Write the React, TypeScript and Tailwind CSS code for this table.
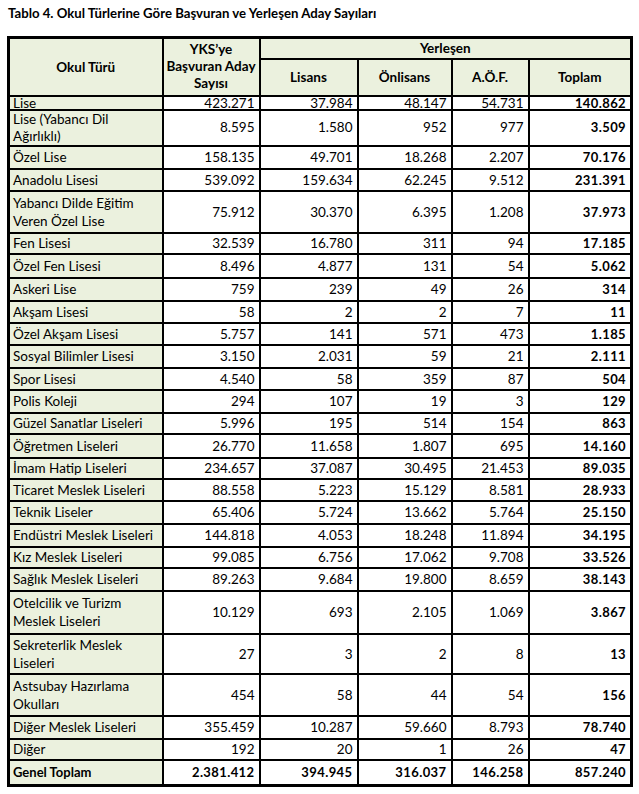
import React from "react";

type Row = {
  label: string[];
  yks: string;
  lisans: string;
  onlisans: string;
  aof: string;
  toplam: string;
  h: string;
};

const rows: Row[] = [
  { label: ["Lise"], yks: "423.271", lisans: "37.984", onlisans: "48.147", aof: "54.731", toplam: "140.862", h: "h-[14px] leading-[12px]" },
  { label: ["Lise (Yabancı Dil", "Ağırlıklı)"], yks: "8.595", lisans: "1.580", onlisans: "952", aof: "977", toplam: "3.509", h: "h-[36px] leading-[17px]" },
  { label: ["Özel Lise"], yks: "158.135", lisans: "49.701", onlisans: "18.268", aof: "2.207", toplam: "70.176", h: "h-[23px]" },
  { label: ["Anadolu Lisesi"], yks: "539.092", lisans: "159.634", onlisans: "62.245", aof: "9.512", toplam: "231.391", h: "h-[22px]" },
  { label: ["Yabancı Dilde Eğitim", "Veren Özel Lise"], yks: "75.912", lisans: "30.370", onlisans: "6.395", aof: "1.208", toplam: "37.973", h: "h-[42px]" },
  { label: ["Fen Lisesi"], yks: "32.539", lisans: "16.780", onlisans: "311", aof: "94", toplam: "17.185", h: "h-[21px]" },
  { label: ["Özel Fen Lisesi"], yks: "8.496", lisans: "4.877", onlisans: "131", aof: "54", toplam: "5.062", h: "h-[24px]" },
  { label: ["Askeri Lise"], yks: "759", lisans: "239", onlisans: "49", aof: "26", toplam: "314", h: "h-[23px]" },
  { label: ["Akşam Lisesi"], yks: "58", lisans: "2", onlisans: "2", aof: "7", toplam: "11", h: "h-[22px]" },
  { label: ["Özel Akşam Lisesi"], yks: "5.757", lisans: "141", onlisans: "571", aof: "473", toplam: "1.185", h: "h-[22px]" },
  { label: ["Sosyal Bilimler Lisesi"], yks: "3.150", lisans: "2.031", onlisans: "59", aof: "21", toplam: "2.111", h: "h-[23px]" },
  { label: ["Spor Lisesi"], yks: "4.540", lisans: "58", onlisans: "359", aof: "87", toplam: "504", h: "h-[22px]" },
  { label: ["Polis Koleji"], yks: "294", lisans: "107", onlisans: "19", aof: "3", toplam: "129", h: "h-[23px]" },
  { label: ["Güzel Sanatlar Liseleri"], yks: "5.996", lisans: "195", onlisans: "514", aof: "154", toplam: "863", h: "h-[21px]" },
  { label: ["Öğretmen Liseleri"], yks: "26.770", lisans: "11.658", onlisans: "1.807", aof: "695", toplam: "14.160", h: "h-[24px]" },
  { label: ["İmam Hatip Liseleri"], yks: "234.657", lisans: "37.087", onlisans: "30.495", aof: "21.453", toplam: "89.035", h: "h-[21px]" },
  { label: ["Ticaret Meslek Liseleri"], yks: "88.558", lisans: "5.223", onlisans: "15.129", aof: "8.581", toplam: "28.933", h: "h-[22px]" },
  { label: ["Teknik Liseler"], yks: "65.406", lisans: "5.724", onlisans: "13.662", aof: "5.764", toplam: "25.150", h: "h-[23px]" },
  { label: ["Endüstri Meslek Liseleri"], yks: "144.818", lisans: "4.053", onlisans: "18.248", aof: "11.894", toplam: "34.195", h: "h-[23px]" },
  { label: ["Kız Meslek Liseleri"], yks: "99.085", lisans: "6.756", onlisans: "17.062", aof: "9.708", toplam: "33.526", h: "h-[21px]" },
  { label: ["Sağlık Meslek Liseleri"], yks: "89.263", lisans: "9.684", onlisans: "19.800", aof: "8.659", toplam: "38.143", h: "h-[23px]" },
  { label: ["Otelcilik ve Turizm", "Meslek Liseleri"], yks: "10.129", lisans: "693", onlisans: "2.105", aof: "1.069", toplam: "3.867", h: "h-[43px]" },
  { label: ["Sekreterlik Meslek", "Liseleri"], yks: "27", lisans: "3", onlisans: "2", aof: "8", toplam: "13", h: "h-[40px]" },
  { label: ["Astsubay Hazırlama", "Okulları"], yks: "454", lisans: "58", onlisans: "44", aof: "54", toplam: "156", h: "h-[42px]" },
  { label: ["Diğer Meslek Liseleri"], yks: "355.459", lisans: "10.287", onlisans: "59.660", aof: "8.793", toplam: "78.740", h: "h-[23px]" },
  { label: ["Diğer"], yks: "192", lisans: "20", onlisans: "1", aof: "26", toplam: "47", h: "h-[21px]" },
];

const total = { yks: "2.381.412", lisans: "394.945", onlisans: "316.037", aof: "146.258", toplam: "857.240" };

const td = "border-2 border-black px-0 py-0 align-middle";
const num = `${td} text-right pr-[4px] whitespace-nowrap`;
const bold = `${td} text-right pr-[4px] whitespace-nowrap font-bold text-[13px] tracking-[0.4px]`;
const head = "border-2 border-black bg-[#ebf1de] font-bold text-center align-middle p-0";

export default function App() {
  return (
    <div className="w-[639px] h-[794px] bg-white text-black text-[13.5px] leading-[18px]" style={{ fontFamily: "Lato, 'Open Sans', sans-serif" }}>
      <div className="h-[36px] pl-[8px] pt-[4px] text-[13.2px] font-bold leading-[18px]">
        Tablo 4. Okul Türlerine Göre Başvuran ve Yerleşen Aday Sayıları
      </div>
      <table className="ml-[7px] border-collapse border-[3px] border-black table-fixed w-[623px]">
        <colgroup>
          <col className="w-[154px]" />
          <col className="w-[97px]" />
          <col className="w-[98px]" />
          <col className="w-[94px]" />
          <col className="w-[77px]" />
          <col className="w-[103px]" />
        </colgroup>
        <thead>
          <tr className="h-[21px]">
            <th rowSpan={2} className={head}>Okul Türü</th>
            <th rowSpan={2} className={`${head} leading-[17px]`}>
              YKS’ye
              <br />
              Başvuran Aday
              <br />
              Sayısı
            </th>
            <th colSpan={4} className={head}>Yerleşen</th>
          </tr>
          <tr className="h-[37px]">
            <th className={head}>Lisans</th>
            <th className={head}>Önlisans</th>
            <th className={head}>A.Ö.F.</th>
            <th className={head}>Toplam</th>
          </tr>
        </thead>
        <tbody>
          {rows.map((r, i) => (
            <tr key={i} className={r.h}>
              <td className={`${td} bg-[#ebf1de] pl-[3px] whitespace-nowrap`}>
                {r.label.map((l, j) => (
                  <div key={j}>{l}</div>
                ))}
              </td>
              <td className={num}>{r.yks}</td>
              <td className={num}>{r.lisans}</td>
              <td className={num}>{r.onlisans}</td>
              <td className={num}>{r.aof}</td>
              <td className={bold}>{r.toplam}</td>
            </tr>
          ))}
          <tr className="h-[26px]">
            <td className={`${td} bg-[#ebf1de] pl-[3px] font-bold text-[13px]`}>Genel Toplam</td>
            <td className={bold}>{total.yks}</td>
            <td className={bold}>{total.lisans}</td>
            <td className={bold}>{total.onlisans}</td>
            <td className={bold}>{total.aof}</td>
            <td className={bold}>{total.toplam}</td>
          </tr>
        </tbody>
      </table>
    </div>
  );
}
